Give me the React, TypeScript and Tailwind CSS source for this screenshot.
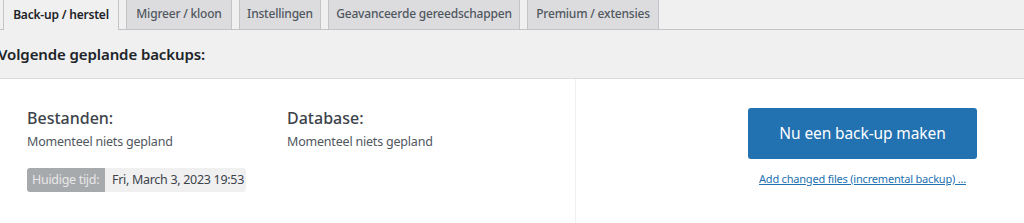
import React from "react";

const tabs = [
  { label: "Back-up / herstel", active: true, w: "w-[116px]" },
  { label: "Migreer / kloon", active: false, w: "w-[106px]" },
  { label: "Instellingen", active: false, w: "w-[82px]" },
  { label: "Geavanceerde gereedschappen", active: false, w: "w-[192px]" },
  { label: "Premium / extensies", active: false, w: "w-[132px]" },
];

export default function App() {
  return (
    <div
      className="w-[1024px] h-[223px] overflow-hidden bg-[#f0f0f1] text-[#3c434a]"
      style={{ fontFamily: '"Noto Sans", "Open Sans", sans-serif' }}
    >
      <div className="h-[78px] flex flex-col">
        <div className="flex items-end gap-[7px] pl-[3px] h-[30px] border-b border-[#c3c4c7]">
          {tabs.map((t) => (
            <div
              key={t.label}
              className={
                t.active
                  ? `${t.w} h-[30px] -mb-px flex items-center justify-center whitespace-nowrap bg-[#f0f0f1] border-x border-[#c3c4c7] text-[12px] font-semibold text-[#1d2327] tracking-[-0.2px]`
                  : `${t.w} h-[30px] flex items-center justify-center whitespace-nowrap bg-[#dcdcde] border-x border-[#c3c4c7] text-[12px] font-medium text-[#50575e] tracking-[-0.2px]`
              }
            >
              {t.label}
            </div>
          ))}
        </div>
        <div className="ml-[-2px] mt-[12px] text-[15px] font-semibold text-[#1d2327] leading-[24px] tracking-[-0.1px] whitespace-nowrap">
          Volgende geplande backups:
        </div>
      </div>
      <div className="h-[145px] bg-white border-t border-[#dcdcde] flex">
        <div className="w-[575px] flex flex-col pl-[27px] pt-[27px]">
          <div className="flex">
            <div className="w-[260px]">
              <div className="text-[16px] font-medium leading-[24px] text-[#3c434a]">Bestanden:</div>
              <div className="mt-[1px] text-[12.5px] leading-[22px] text-[#50575e] tracking-[-0.2px] whitespace-nowrap">Momenteel niets gepland</div>
            </div>
            <div>
              <div className="text-[16px] font-medium leading-[24px] text-[#3c434a]">Database:</div>
              <div className="mt-[1px] text-[12.5px] leading-[22px] text-[#50575e] tracking-[-0.2px] whitespace-nowrap">Momenteel niets gepland</div>
            </div>
          </div>
          <div className="mt-[15px] flex h-[24px] w-fit rounded-[3px] overflow-hidden text-[12.5px] tracking-[-0.3px] whitespace-nowrap">
            <span className="bg-[#a7aaad] text-[#e8e8e8] px-[5px] flex items-center w-[78px]">Huidige tijd:</span>
            <span className="bg-[#f0f0f1] text-[#3c434a] px-[7px] flex items-center w-[141px]">Fri, March 3, 2023 19:53</span>
          </div>
        </div>
        <div className="flex-1 border-l border-[#f0f0f1] flex justify-end pr-[47px] pt-[29px]">
          <div className="flex flex-col items-center w-[229px]">
            <button className="w-[229px] h-[51px] bg-[#2271b1] rounded-[3px] text-white text-[15.5px] tracking-[-0.1px] whitespace-nowrap">
              Nu een back-up maken
            </button>
            <a className="mt-[12px] text-[11px] text-[#2271b1] underline tracking-[-0.2px] whitespace-nowrap" href="#">
              Add changed files (incremental backup) ...
            </a>
          </div>
        </div>
      </div>
    </div>
  );
}
